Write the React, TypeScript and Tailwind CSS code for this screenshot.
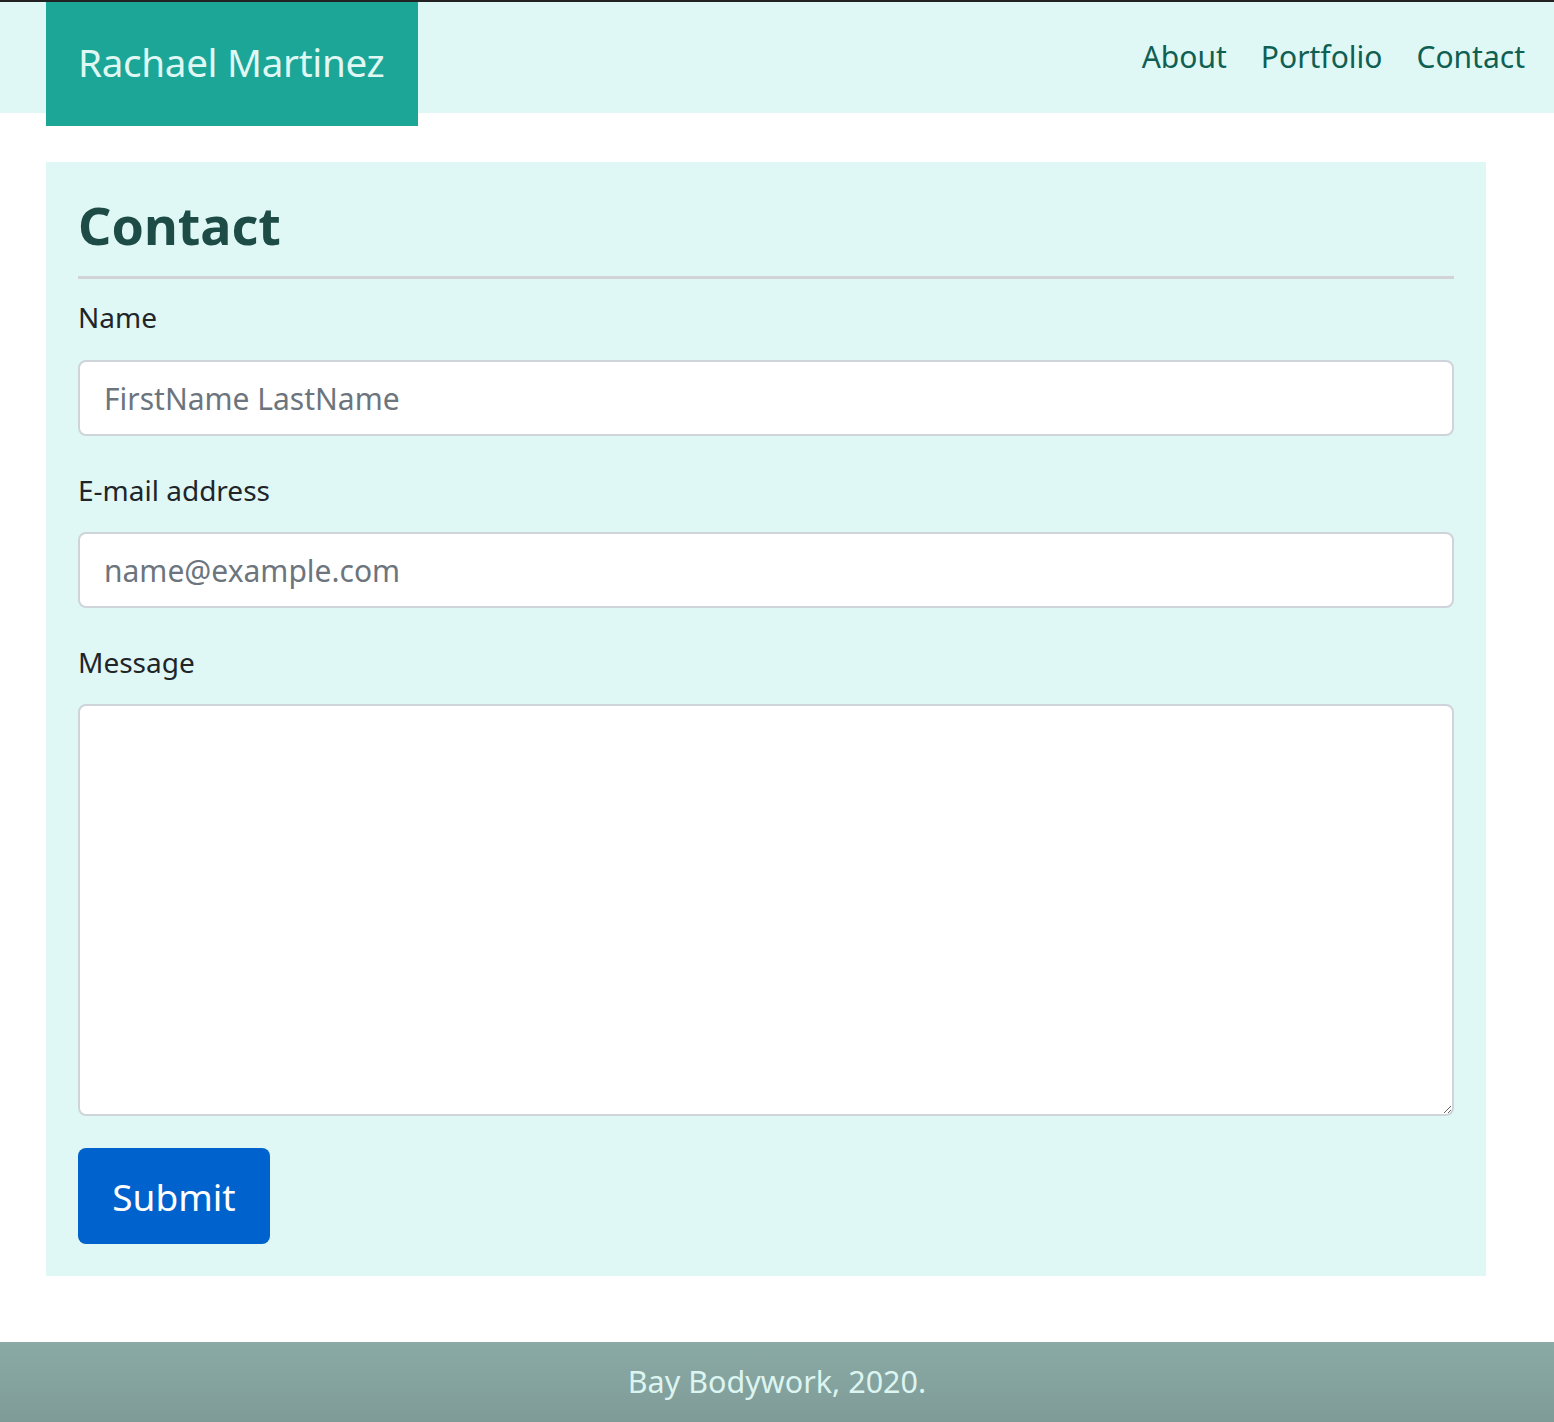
import React from "react";

export default function App() {
  const font = { fontFamily: '"Noto Sans", "Open Sans", sans-serif' };
  return (
    <div className="min-h-[1422px] bg-white flex flex-col border-t-2 border-[#222222]" style={font}>
      <header className="h-[111px] bg-[#dff8f5] flex items-start justify-between pl-[46px] pr-[29px]">
        <div className="h-[124px] w-[372px] bg-[#1ba698] flex items-center pl-[32px] pb-[3px]">
          <span className="text-[38.6px] text-[#e0f8f4] leading-none tracking-[-0.3px]">Rachael Martinez</span>
        </div>
        <nav className="flex gap-[34px] pt-[40px] text-[30px] text-[#0f5f52] leading-none">
          <a>About</a>
          <a>Portfolio</a>
          <a>Contact</a>
        </nav>
      </header>

      <main className="mt-[49px] ml-[46px] w-[1440px] bg-[#dff8f5] px-[32px] pt-[30px] pb-[32px]">
        <h1 className="text-[52px] font-bold text-[#1d4b45] leading-[1.2] pt-[2px] pb-[20px] border-b-[3px] border-[#d1d3d4]">
          Contact
        </h1>
        <form className="flex flex-col">
          <label className="mt-[17px] text-[28px] leading-[1.5] text-[#212529] mb-[22px]">Name</label>
          <input
            className="h-[76px] bg-white border-2 border-[#ced4da] rounded-[8px] px-[24px] text-[30px] text-[#495057] placeholder:text-[#6c757d] outline-none"
            placeholder="FirstName LastName"
          />
          <label className="mt-[33px] text-[28px] leading-[1.5] text-[#212529] mb-[21px]">E-mail address</label>
          <input
            className="h-[76px] bg-white border-2 border-[#ced4da] rounded-[8px] px-[24px] text-[30px] text-[#495057] placeholder:text-[#6c757d] outline-none"
            placeholder="name@example.com"
          />
          <label className="mt-[33px] text-[28px] leading-[1.5] text-[#212529] mb-[21px]">Message</label>
          <textarea className="h-[412px] bg-white border-2 border-[#ced4da] rounded-[8px] px-[24px] py-[12px] text-[30px] outline-none" />
          <div className="mt-[32px]">
            <button
              type="button"
              className="w-[192px] h-[96px] bg-[#0062cc] text-white text-[37px] rounded-[8px]"
            >
              Submit
            </button>
          </div>
        </form>
      </main>

      <div className="flex-1" />
      <footer className="h-[80px] bg-gradient-to-b from-[#8aaaa6] to-[#7f9b97] flex items-center justify-center text-[30.5px] text-[#dcf5f1]">
        Bay Bodywork, 2020.
      </footer>
    </div>
  );
}
